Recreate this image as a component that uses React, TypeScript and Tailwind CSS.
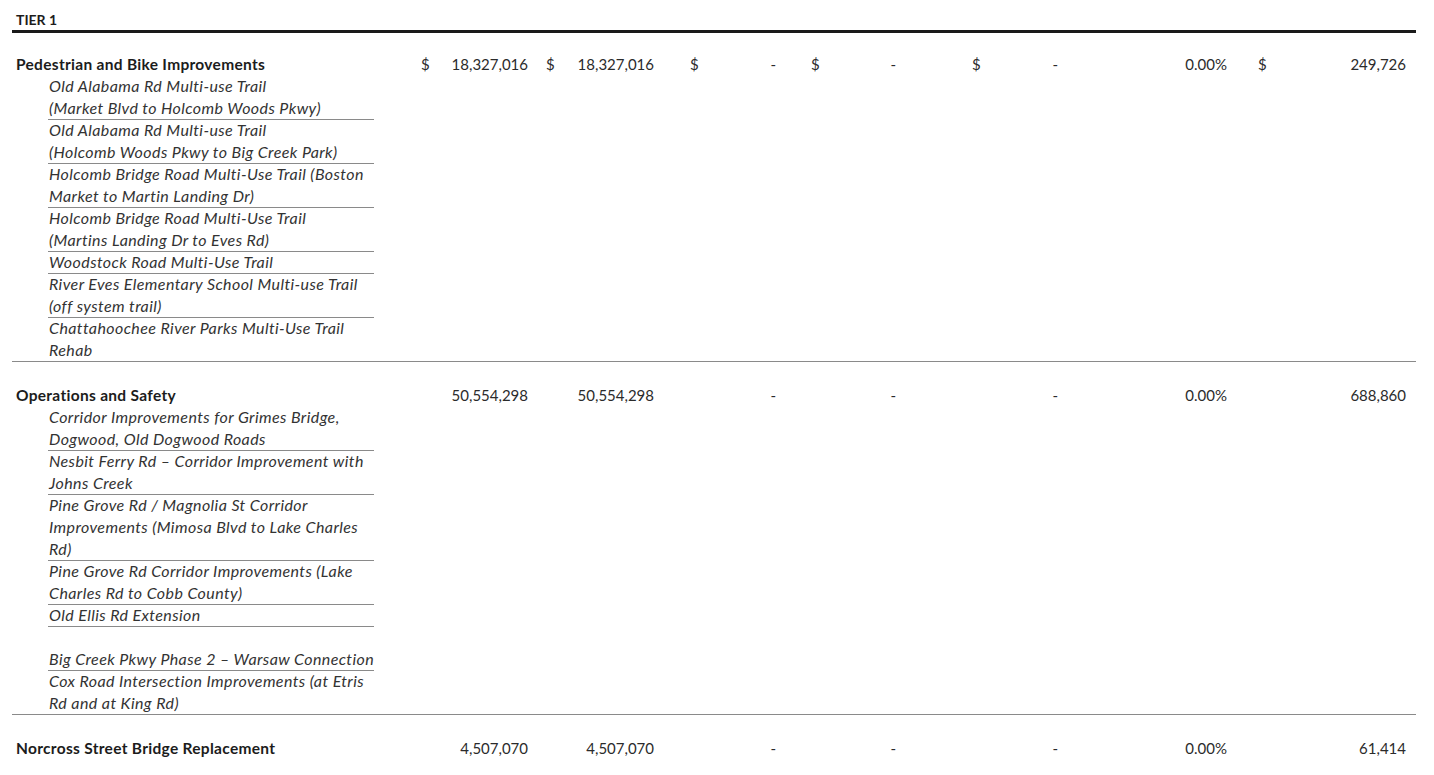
import React from "react";

type Row = {
    title: string;
    a: string;
    b: string;
    dollars: boolean;
    total: string;
    items: string[][];
};

const ROWS: Row[] = [
    {
        title: "Pedestrian and Bike Improvements",
        a: "18,327,016",
        b: "18,327,016",
        dollars: true,
        total: "249,726",
        items: [
            ["Old Alabama Rd Multi-use Trail", "(Market Blvd to Holcomb Woods Pkwy)"],
            ["Old Alabama Rd Multi-use Trail", "(Holcomb Woods Pkwy to Big Creek Park)"],
            ["Holcomb Bridge Road Multi-Use Trail (Boston", "Market to Martin Landing Dr)"],
            ["Holcomb Bridge Road Multi-Use Trail", "(Martins Landing Dr to Eves Rd)"],
            ["Woodstock Road Multi-Use Trail"],
            ["River Eves Elementary School Multi-use Trail", "(off system trail)"],
            ["Chattahoochee River Parks Multi-Use Trail", "Rehab"],
        ],
    },
    {
        title: "Operations and Safety",
        a: "50,554,298",
        b: "50,554,298",
        dollars: false,
        total: "688,860",
        items: [
            ["Corridor Improvements for Grimes Bridge,", "Dogwood, Old Dogwood Roads"],
            ["Nesbit Ferry Rd \u2013 Corridor Improvement with", "Johns Creek"],
            ["Pine Grove Rd / Magnolia St Corridor", "Improvements (Mimosa Blvd to Lake Charles", "Rd)"],
            ["Pine Grove Rd Corridor Improvements (Lake", "Charles Rd to Cobb County)"],
            ["Old Ellis Rd Extension"],
            [],
            ["Big Creek Pkwy Phase 2 \u2013 Warsaw Connection"],
            ["Cox Road Intersection Improvements (at Etris", "Rd and at King Rd)"],
        ],
    },
    {
        title: "Norcross Street Bridge Replacement",
        a: "4,507,070",
        b: "4,507,070",
        dollars: false,
        total: "61,414",
        items: [],
    },
];

function Money({dollar, value, className}: {dollar: boolean; value: string; className: string}) {
    return (
        <div className={"flex justify-between " + className}>
            <span>{dollar ? "$" : ""}</span>
            <span>{value}</span>
        </div>
    );
}

function Section({row, last}: {row: Row; last: boolean}) {
    return (
        <div className={last ? "pt-[22px]" : "pt-[22px] border-b border-[#8a8a8a]"}>
            <div className="flex h-[22px] items-center text-[#2b2b2b]">
                <div className="w-[403px] pl-[4px] font-bold text-[15.5px] tracking-[0.3px] text-[#1c1c1c]">{row.title}</div>
                <Money dollar={row.dollars} value={row.a} className="w-[121px] pl-[6px] pr-[8px]"/>
                <Money dollar={row.dollars} value={row.b} className="w-[124px] pl-[10px] pr-[6px]"/>
                <Money dollar={row.dollars} value="-" className="w-[122px] pl-[30px] pr-[6px]"/>
                <Money dollar={row.dollars} value="-" className="w-[118px] pl-[29px] pr-[4px]"/>
                <Money dollar={row.dollars} value="-" className="w-[162px] pl-[72px] pr-[4px]"/>
                <div className="w-[170px] text-right pr-[5px]">0.00%</div>
                <Money dollar={row.dollars} value={row.total} className="w-[184px] pl-[26px] pr-[10px]"/>
            </div>
            <div className="ml-[36px] w-[326px] italic text-[16px] tracking-[0.4px] text-[#333333]">
                {row.items.map((lines, i) => {
                    const underline = lines.length > 0 && i < row.items.length - 1;
                    return (
                        <div key={i}
                             className={"min-h-[22px] pl-[1px] " + (underline ? "shadow-[0_1px_0_#8a8a8a]" : "")}>
                            {lines.map((l, j) => (
                                <div key={j} className="h-[22px] leading-[22px] whitespace-nowrap">{l}</div>
                            ))}
                        </div>
                    );
                })}
            </div>
        </div>
    );
}

export default function App() {
    return (
        <div className="w-[1434px] h-[775px] bg-white overflow-hidden pl-[12px] pt-[10px]"
             style={{fontFamily: "Lato, 'Liberation Sans', sans-serif"}}>
            <div className="w-[1404px] text-[15px] leading-[22px]">
                <div className="h-[23px] pl-[4px] text-[14px] font-bold text-[#1c1c1c] leading-[20px] border-b-[3px] border-[#1a1a1a]">
                    TIER 1
                </div>
                <div className="-mt-[2px]">
                    {ROWS.map((row, i) => (
                        <Section key={i} row={row} last={i === ROWS.length - 1}/>
                    ))}
                </div>
            </div>
        </div>
    );
}
